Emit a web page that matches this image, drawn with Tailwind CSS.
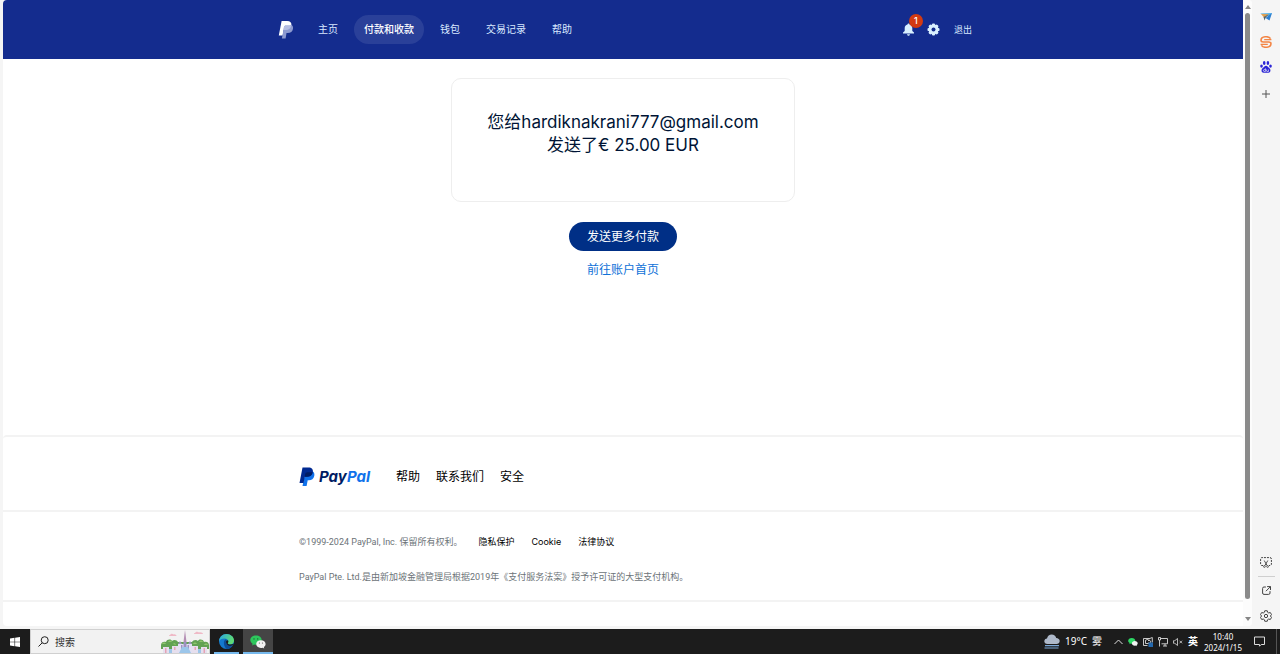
<!DOCTYPE html>
<html lang="zh-CN">
  <head>
    <meta charset="UTF-8" />
    <meta name="viewport" content="width=device-width, initial-scale=1.0" />
    <title>PayPal</title>
    <script src="https://cdn.jsdelivr.net/npm/@tailwindcss/browser@4"></script>
  </head>
  <body class="flex h-screen flex-col overflow-hidden bg-[#f5f5f5] font-['Inter','Noto_Sans_CJK_SC',sans-serif] text-[#001435]">
    <div class="flex min-h-0 flex-1">
      <!-- Browser page -->
      <div class="mb-[3px] ml-[3px] flex min-w-0 flex-1 overflow-hidden rounded bg-white">
        <div class="flex min-w-0 flex-1 flex-col">
          <header class="bg-[#142c8e] py-[15px]">
            <div class="mx-auto flex w-full max-w-[698px] items-center justify-between pl-1">
              <nav class="flex items-center gap-1.5 text-[10px] leading-[29px] text-[#d9e9ff]">
                <a href="#" aria-label="PayPal" class="mr-2">
                  <svg class="h-[18px] w-4" viewBox="0 0 16 18">
                    <path fill="#fff" d="M3.600 0h5.600c3 0 4.600 1.600 4.200 4.300-.5 3.200-2.600 4.700-5.500 4.700H5.600L4.700 14.400H.8z" />
                    <path fill="#8d9ad0" d="M13.300 3.700c1.500.8 2 2.200 1.700 4-.5 2.900-2.400 4.200-5.200 4.200H8.500L7.600 17.600H3.900L5.900 6.200c.2-1.200.9-1.800 2-1.800h4c.6 0 1-.3 1.400-.7z" />
                    <path fill="#b4bde2" d="M13.400 4.300C12.900 7.500 10.800 9 7.900 9H5.500l.5-2.800c.2-1.200.9-1.800 2-1.800h4c.6 0 1 0 1.400-.1z" />
                  </svg>
                </a>
                <a href="#" class="px-2.5">主页</a>
                <a href="#" class="rounded-full bg-[#2a4099] px-2.5 font-medium text-white">付款和收款</a>
                <a href="#" class="px-2.5">钱包</a>
                <a href="#" class="px-2.5">交易记录</a>
                <a href="#" class="px-2.5">帮助</a>
              </nav>
              <div class="flex items-center gap-3 text-[9px] text-[#d9e9ff]">
                <button type="button" aria-label="通知" class="relative">
                  <svg class="size-[13px]" viewBox="0 0 13 13" fill="#d9f0ff">
                    <path d="M6.500.5c.6 0 1 .4 1 .9 1.700.4 2.800 1.800 2.800 3.600v3l1.700 1.600v.9H1v-.9L2.700 8V5c0-1.800 1.100-3.200 2.800-3.600 0-.5.400-.9 1-.9zM5 11.200h3c-.1.900-.7 1.500-1.500 1.500S5.100 12.100 5 11.200z" />
                  </svg>
                  <span class="absolute -top-[9px] left-[7px] size-3.5 rounded-full bg-[#d23a12] text-center text-[9px] leading-[14px] font-medium text-white">1</span>
                </button>
                <button type="button" aria-label="设置">
                  <svg class="size-[13px]" viewBox="0 0 13 13">
                    <g fill="#d9f0ff">
                      <circle cx="6.500" cy="6.500" r="4.900" />
                      <rect x="4.900" y=".5" width="3.200" height="12" rx="1.200" />
                      <rect x="4.900" y=".5" width="3.200" height="12" rx="1.200" transform="rotate(45 6.500 6.500)" />
                      <rect x="4.900" y=".5" width="3.200" height="12" rx="1.200" transform="rotate(90 6.500 6.500)" />
                      <rect x="4.900" y=".5" width="3.200" height="12" rx="1.200" transform="rotate(135 6.500 6.500)" />
                    </g>
                    <circle cx="6.500" cy="6.500" r="2" fill="#142c8e" />
                  </svg>
                </button>
                <a href="#" class="ml-0.5">退出</a>
              </div>
            </div>
          </header>

          <main class="flex flex-1 flex-col items-center pt-[19px]">
            <section class="w-full max-w-[344px] rounded-[10px] border border-[#eeeeee] px-6 pt-8 pb-11 text-center">
              <h1 class="text-[17px] leading-[23px]">您给hardiknakrani777@gmail.com<br />发送了€ 25.00 EUR</h1>
            </section>
            <button type="button" class="mt-5 rounded-full bg-[#002f86] px-[18px] text-[12px] leading-[29px] text-white">发送更多付款</button>
            <a href="#" class="mt-[11px] text-[12px] leading-4 text-[#1072d8]">前往账户首页</a>
          </main>

          <footer class="text-black">
            <div class="rounded-t border-t-2 border-[#f3f3f3] pt-[30px] pb-[23px]">
              <div class="mx-auto flex w-full max-w-[648px] items-center">
                <a href="#" class="flex w-[97px] items-center gap-1">
                  <svg class="h-5 w-4" viewBox="0 0 16 20">
                    <path fill="#1072eb" d="M13.500 4.200c1.600.9 2.200 2.500 1.800 4.500-.6 3-2.600 4.600-5.500 4.600H8.700L7.600 19H3.500L6 6.500z" />
                    <path fill="#002991" d="M3.500.5h6c3.200 0 4.900 1.800 4.300 4.700-.6 3-2.900 4.600-5.900 4.600H5.700L4.600 16H.5z" />
                    <path fill="#001c64" d="M13.800 5.200c-.6 3-2.900 4.600-5.900 4.600H5.700l.5-2.700c.2-1.200 1-1.900 2.200-1.900z" />
                  </svg>
                  <span class="text-[15px] leading-5 font-bold text-[#001c64] italic">Pay<span class="text-[#1072eb]">Pal</span></span>
                </a>
                <nav class="flex gap-4 text-[12px] leading-5">
                  <a href="#">帮助</a>
                  <a href="#">联系我们</a>
                  <a href="#">安全</a>
                </nav>
              </div>
            </div>
            <div class="border-y-2 border-[#f3f3f3] pt-[22px] pb-[15px] text-[9px] leading-4">
              <div class="mx-auto flex w-full max-w-[648px] flex-col gap-[19px]">
                <div class="flex gap-4">
                  <p class="font-['Roboto','Noto_Sans_CJK_SC',sans-serif] text-[#6c7378]">©1999-2024 PayPal, Inc. 保留所有权利。</p>
                  <nav class="flex gap-[17px]">
                    <a href="#">隐私保护</a>
                    <a href="#">Cookie</a>
                    <a href="#">法律协议</a>
                  </nav>
                </div>
                <p class="font-['Roboto','Noto_Sans_CJK_SC',sans-serif] text-[#6c7378]">PayPal Pte. Ltd.是由新加坡金融管理局根据2019年《支付服务法案》授予许可证的大型支付机构。</p>
              </div>
            </div>
            <div class="h-6"></div>
          </footer>
        </div>

        <!-- Scrollbar -->
        <div class="flex w-[9px] flex-col items-center gap-1 bg-[#fcfcfc] py-[5px]">
          <svg class="h-1 w-1.5" viewBox="0 0 6 4"><path fill="#858585" d="M3 0l3 4H0z" /></svg>
          <div class="mb-3.5 w-[5px] flex-1 rounded-full bg-[#8a8a8a]"></div>
          <svg class="h-1 w-1.5" viewBox="0 0 6 4"><path fill="#858585" d="M0 0h6L3 4z" /></svg>
        </div>
      </div>

      <!-- Browser sidebar -->
      <aside class="flex w-7 flex-col items-center justify-between pt-1 pb-px">
        <div class="flex flex-col">
          <button type="button" aria-label="发送" class="flex size-[25px] items-center justify-center">
            <svg class="size-3" viewBox="0 0 12 12">
              <path fill="#4fb0e8" d="M0 2.500L12 2 9.500 6z" />
              <path fill="#e5a04c" d="M1 3l8 .3-5 3.200z" />
              <path fill="#2f7fd0" d="M12 2L9.500 9.500 5.500 7z" />
              <path fill="#53666f" d="M3.500 6l5-2.500L5.500 7l-1 2.500z" />
            </svg>
          </button>
          <button type="button" aria-label="搜狗" class="flex size-[25px] items-center justify-center">
            <svg class="size-3" viewBox="0 0 12 12" fill="none" stroke="#f38545" stroke-width="1.600">
              <path d="M10.600 2.600C8.600-.2 1.100.1 1 4.300 1 5.600 2 6 3.400 6h5.200c1.400 0 2.400.4 2.400 1.700-.1 4.200-7.600 4.500-9.600 1.700" />
              <path stroke-width="1.100" d="M11.400 3.600H4.200M.6 8.400h7.200" />
            </svg>
          </button>
          <button type="button" aria-label="百度" class="flex size-[25px] items-center justify-center">
            <svg class="size-3" viewBox="0 0 12 12" fill="#2b24d6">
              <ellipse cx="4.200" cy="2" rx="1.300" ry="1.900" />
              <ellipse cx="7.900" cy="2" rx="1.300" ry="1.900" />
              <ellipse cx="1.500" cy="5.100" rx="1.300" ry="1.700" />
              <ellipse cx="10.500" cy="5.100" rx="1.300" ry="1.700" />
              <path d="M6 4.700c1.500 0 2.200 1.600 3.400 2.600 1.700 1.500 1.300 4.500-1 4.500H3.600c-2.300 0-2.700-3-1-4.500C3.800 6.300 4.500 4.700 6 4.700z" />
              <path fill="none" stroke="#f5f5f5" stroke-width=".7" d="M5.400 7.300v3.200H4.300c-1.200 0-1.200-1.900 0-1.900h1.100M6.600 8.500v1.400c0 .4.200.6.600.6h1.200v-2" />
            </svg>
          </button>
          <button type="button" aria-label="添加" class="flex h-[30px] w-[25px] items-center justify-center">
            <svg class="size-2" viewBox="0 0 8 8" stroke="#555"><path d="M4 0v8M0 4h8" /></svg>
          </button>
        </div>
        <div class="flex flex-col items-center">
          <button type="button" aria-label="截图" class="flex size-[25px] items-center justify-center">
            <svg class="h-[11px] w-3" viewBox="0 0 12 11" fill="none" stroke="#444">
              <path stroke-dasharray="2 1" d="M3 8.500H2q-1.400 0-1.400-1.400V2Q.6.600 2 .6h8q1.400 0 1.400 1.400v5.100q0 1.400-1.400 1.400H9" />
              <path stroke-width=".9" d="M4.200 3.500l3 5.200M7.800 3.500l-3 5.200" />
              <circle cx="4.400" cy="9.500" r=".9" stroke-width=".8" />
              <circle cx="7.600" cy="9.500" r=".9" stroke-width=".8" />
            </svg>
          </button>
          <div class="my-px h-px w-[17px] bg-[#cfcfcf]"></div>
          <button type="button" aria-label="打开链接" class="flex size-[25px] items-center justify-center">
            <svg class="size-[9px]" viewBox="0 0 9 9" fill="none" stroke="#444" stroke-linecap="round">
              <path d="M3.500 1H2Q.6 1 .6 2.400V7Q.6 8.400 2 8.400h4.600Q8 8.400 8 7V5.500M5.500.6h3v3M8.300.8L4.200 4.900" />
            </svg>
          </button>
          <button type="button" aria-label="侧栏设置" class="flex size-[25px] items-center justify-center">
            <svg class="size-3" viewBox="0 0 24 24" fill="none" stroke="#444" stroke-width="2" stroke-linejoin="round">
              <path d="M9.500 1.500h5l.8 3.200 2.100 1.200 3.200-.9 2.500 4.300L20.700 12l2.400 2.700-2.500 4.300-3.200-.9-2.100 1.200-.8 3.200h-5l-.8-3.200-2.100-1.200-3.200.9L.9 14.700 3.300 12 .9 9.300 3.400 5l3.200.9 2.100-1.200z" />
              <circle cx="12" cy="12" r="3.300" />
            </svg>
          </button>
        </div>
      </aside>
    </div>

    <!-- Taskbar -->
    <div class="flex h-[25px] items-stretch justify-between bg-[#1c1c1c] text-white">
      <div class="flex">
        <button type="button" aria-label="开始" class="flex w-[30px] items-center justify-center">
          <svg class="size-2.5" viewBox="0 0 10 10" fill="#fff">
            <path d="M0 1.400L4.500.8v3.900H0zM5.100.7L10 0v4.700H5.100zM0 5.300h4.500v3.900L0 8.600zM5.100 5.300H10V10l-4.900-.7z" />
          </svg>
        </button>
        <div class="flex w-[180px] items-center border border-[#d0d0d0] bg-[#f2f2f2] pl-[7px]">
          <svg class="size-[11px] shrink-0" viewBox="0 0 11 11" fill="none" stroke="#222">
            <circle cx="6.700" cy="4.200" r="3.500" />
            <path d="M4.200 6.800L.5 10.500" />
          </svg>
          <input type="text" aria-label="搜索" placeholder="搜索" class="ml-1.5 w-[106px] text-[10px] leading-4 text-[#333] outline-none placeholder:text-[#333]" />
          <svg class="h-[23px] w-12 shrink-0" viewBox="0 0 48 23">
            <path fill="#efb9c6" d="M9 5c1-2 3-1.500 3.500-.5 1.500-.5 3 .5 3 1.500H8C8 5.500 8.300 5 9 5zM34 3c1-2 3-1.500 4-.5 2-.5 4 .5 4 1.500h-9c0-.700.3-1 1-1z" />
            <path fill="#62a253" d="M0 19v-4c0-3 3-4 5-3 1-3 5-3 6-1 2-2 5-1 6 1h14c1-2 4-3 6-1 1-2 5-2 6 1 2-1 5 0 5 3v4z" />
            <path fill="#8fc56c" d="M1 14c1-2 3-2 4 0zM7 12c1-2 3-2 4 0zM12 14c1-1.500 2.500-1 3 1zM32 14c1-2 3-2 4 0zM38 12c1-2 3-2 4 0zM43 15c1-2 3-2 4 0z" />
            <path fill="#e6dfee" d="M2 17h6v6H2zM11 16h6v7h-6zM31 16h6v7h-6zM40 17h6v6h-6z" />
            <path fill="#e2e0f2" d="M17 14h14v9H17z" />
            <path fill="#9d91c0" d="M17 14l2-3 2 3zM27 14l2-3 2 3zM20 15h1.500v5H20zM26.500 15H28v5h-1.500zM22.500 12h3v6h-3z" />
            <path fill="#b48fb4" d="M22.500 12L24 0l1.500 12z" />
            <path fill="#9cc6ea" d="M18 23l3-6h6l3 6zM8 19h3v4H8zM37 19h3v4h-3z" />
            <path fill="#e5a3b6" d="M4 18h1.500v5H4zM13 17h1.500v3H13zM33.500 17H35v3h-1.500zM42.500 18H44v5h-1.500z" />
          </svg>
        </div>
        <button type="button" aria-label="Microsoft Edge" class="flex w-[33px] flex-col items-center justify-between pt-[5px]">
          <svg class="size-[15px]" viewBox="0 0 16 16">
            <defs>
              <linearGradient id="edgeTop" x1="0" x2="1" y1="0" y2=".3">
                <stop offset="0" stop-color="#29a8e8" />
                <stop offset="1" stop-color="#5fdc73" />
              </linearGradient>
            </defs>
            <circle cx="8" cy="8" r="8" fill="#1479ce" />
            <path fill="url(#edgeTop)" d="M0 8c.2-4.800 3.800-8 8-8 4.600 0 8 3.200 8 6.800 0 2.700-2.100 4.200-4.200 4.200-1.600 0-2.600-.5-2.600-1.100 0-.5.7-.8.700-2 0-1.800-1.700-3.200-4-3.200C3 4.700.700 5.800 0 8z" />
            <path fill="#0d4d97" d="M5.200 9.300c0-2.100 1.300-3.600 2.800-3.900C6.700 7.500 7.200 11.800 12 12c1.200 0 2.200-.3 3-.6-1.300 2.700-3.800 4.500-6.800 4.500-2-1.500-3-4.300-3-6.600z" />
            <path fill="#1c1c1c" d="M8 7c1.200-.8 2.300.2 1.900 1.500-.3.900-.8 1-.4 1.900.6 1 3 1 6 .3-.3 1-.8 1.400-1.400 1.600-2.200.4-4.500 0-5.700-1.500C7.400 9.400 7.200 8 8 7z" />
          </svg>
          <span class="h-0.5 w-[25px] bg-[#76b9ed]"></span>
        </button>
        <button type="button" aria-label="微信" class="flex w-[30px] flex-col items-center justify-between bg-[#454545] pt-[5px]">
          <svg class="size-4" viewBox="0 0 16 16">
            <path fill="#2dc75c" d="M6 1.500c3.300 0 5.700 2 5.700 4.600S9.300 10.700 6 10.700c-.7 0-1.300-.1-1.900-.3l-2 1.100.5-1.800C1.200 8.900.3 7.600.3 6.100.3 3.500 2.700 1.500 6 1.500z" />
            <path fill="#f2f2f2" d="M10.900 6.200c2.700 0 4.700 1.700 4.700 3.900 0 1.200-.7 2.300-1.800 3l.4 1.500-1.600-.9c-.5.200-1.100.3-1.700.3-2.700 0-4.700-1.700-4.700-3.900s2-3.900 4.700-3.900z" />
            <g fill="#1c5c34"><circle cx="4" cy="4.900" r=".7" /><circle cx="7.700" cy="4.900" r=".7" /></g>
            <g fill="#555"><circle cx="9.400" cy="9" r=".6" /><circle cx="12.500" cy="9" r=".6" /></g>
          </svg>
          <span class="h-0.5 w-full bg-[#76b9ed]"></span>
        </button>
      </div>

      <div class="flex items-center font-['Noto_Sans','Noto_Sans_CJK_SC',sans-serif] text-[10px]">
        <button type="button" class="mr-3 flex items-center gap-[5px]">
          <svg class="h-[15px] w-4" viewBox="0 0 16 15">
            <path fill="#aeb9ca" d="M3.500 10C1.500 10 .3 8.800.3 7.200S1.500 4.500 3 4.400C3.600 2 5.300.5 7.700.5c2.300 0 4 1.400 4.500 3.400 2 0 3.500 1.300 3.500 3.100S14.300 10 12.500 10z" />
            <path stroke="#7aa7d8" stroke-width="1.200" d="M1 11.700h14M.5 14h14" />
          </svg>
          <span>19°C</span>
          <span>雾</span>
        </button>
        <div class="flex items-center gap-[5px]">
          <svg class="h-2.5 w-[9px]" viewBox="0 0 9 10" fill="none" stroke="#ddd"><path d="M.5 7l4-4 4 4" /></svg>
          <svg class="size-2.5" viewBox="0 0 16 16">
            <path fill="#2dd865" d="M6 1.500c3.300 0 5.700 2 5.700 4.600S9.300 10.700 6 10.700c-.7 0-1.300-.1-1.900-.3l-2 1.100.5-1.800C1.200 8.900.3 7.600.3 6.100.3 3.500 2.700 1.500 6 1.500z" />
            <path fill="#f2f2f2" d="M10.900 6.200c2.700 0 4.700 1.700 4.700 3.900 0 1.200-.7 2.300-1.800 3l.4 1.500-1.600-.9c-.5.200-1.100.3-1.700.3-2.700 0-4.700-1.700-4.700-3.900s2-3.900 4.700-3.900z" />
          </svg>
          <svg class="size-2.5" viewBox="0 0 10 10" fill="none" stroke="#ddd" stroke-width=".9">
            <path d="M.5 1.500h6M.5 1.500v7h4M2.500 3.200l6.800-2.700v5M2.500 3.200v3.300h3M5 3.800a1.500 1.500 0 1 1 0 2" />
            <rect x="5.500" y="5.500" width="4.500" height="4.500" fill="#2468ad" stroke="none" />
          </svg>
          <svg class="size-2.5" viewBox="0 0 10 10" fill="none" stroke="#ddd" stroke-width=".9">
            <path d="M3 1.500h6.500v5.300H3.500M5 9h4M7 6.800V9M.5.500h2v2.500h-2zM1.500 3v6.500" />
          </svg>
          <svg class="size-2.5" viewBox="0 0 10 10" fill="none" stroke="#ddd" stroke-width=".8">
            <path d="M.5 3.700h1.300L4.500 1.500v7L1.800 6.300H.5zM6.500 3.700l2.600 2.600M9.100 3.700L6.500 6.300" />
          </svg>
          <span class="font-bold">英</span>
        </div>
        <div class="mx-1.5 flex flex-col items-center text-[8px] leading-[11px]">
          <time>10:40</time>
          <time>2024/1/15</time>
        </div>
        <button type="button" aria-label="通知中心" class="mr-[11px] ml-1.5">
          <svg class="size-[11px]" viewBox="0 0 11 11" fill="none" stroke="#ddd"><path d="M.5 1h10v7.500H7.200L5.500 10.200V8.500h-5z" /></svg>
        </button>
        <div class="mr-[3px] w-px self-stretch bg-[#555]"></div>
      </div>
    </div>
  </body>
</html>
